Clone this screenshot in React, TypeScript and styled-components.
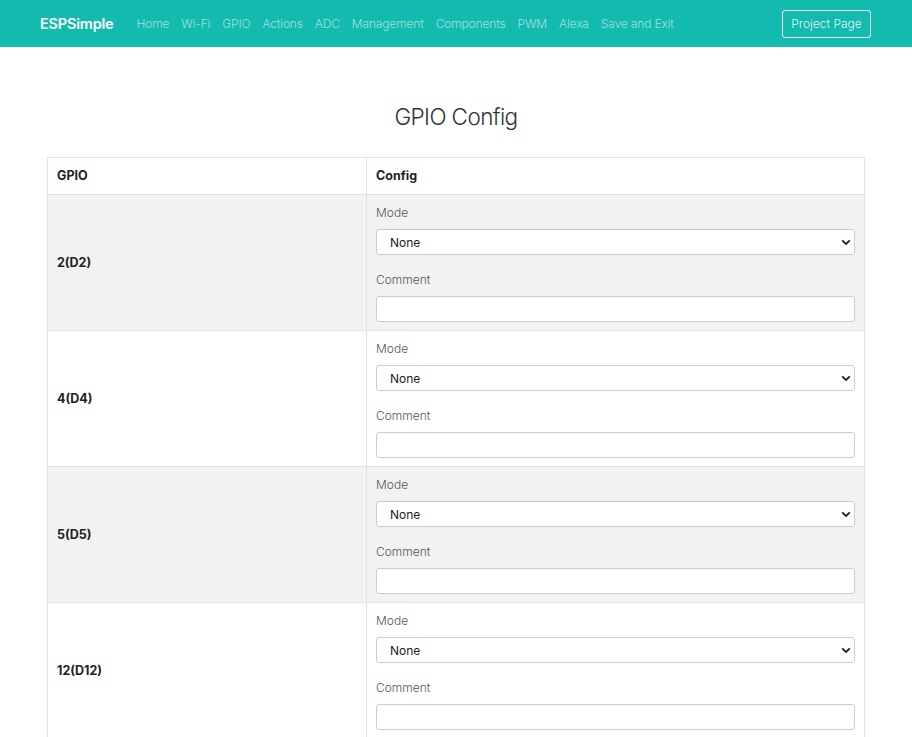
import React from "react";
import styled, { createGlobalStyle } from "styled-components";

const Global = createGlobalStyle`
  html, body { margin: 0; padding: 0; background: #fff; }
  body { font-family: Inter, "Noto Sans", "Liberation Sans", sans-serif; color: #333; font-size: 13px; }
  * { box-sizing: border-box; }
`;

const NavBar = styled.nav`
  height: 47px;
  background: #13baae;
  display: flex;
  align-items: center;
  padding: 0 41px 0 40px;
`;

const Brand = styled.a`
  color: #fff;
  font-weight: 600;
  font-size: 14.5px;
  letter-spacing: -0.2px;
  margin-right: 17px;
  text-decoration: none;
`;

const NavLinks = styled.div`
  display: flex;
  align-items: center;
  flex: 1;
`;

const NavLink = styled.a`
  color: rgba(255, 255, 255, 0.6);
  font-size: 12px;
  letter-spacing: -0.15px;
  font-weight: 300;
  padding: 0 6px;
  text-decoration: none;
`;

const OutlineButton = styled.a`
  border: 1px solid rgba(255, 255, 255, 0.9);
  border-radius: 3px;
  color: rgba(255, 255, 255, 0.9);
  font-size: 12px;
  font-weight: 300;
  height: 28px;
  width: 89px;
  justify-content: center;
  display: flex;
  align-items: center;
  text-decoration: none;
`;

const Main = styled.main`
  padding: 0 47px;
`;

const Title = styled.h1`
  margin: 55px 0 26px;
  text-align: center;
  font-size: 22.5px;
  letter-spacing: -0.6px;
  line-height: 29px;
  font-weight: 300;
  color: #333;
`;

const Table = styled.table`
  width: 100%;
  border-collapse: collapse;
  border: 1px solid #e2e2e2;
  table-layout: fixed;
`;

const HeadCell = styled.th<{ $w?: string }>`
  text-align: left;
  font-weight: 700;
  font-size: 12.5px;
  line-height: 18px;
  padding: 9px 9px;
  border: 1px solid #e2e2e2;
  width: ${(p) => p.$w ?? "auto"};
  color: #222;
`;

const Row = styled.tr<{ $striped: boolean }>`
  background: ${(p) => (p.$striped ? "#f2f2f2" : "#fff")};
`;

const PinCell = styled.td`
  font-weight: 700;
  font-size: 12.5px;
  color: #222;
  padding: 9px;
  vertical-align: middle;
  border: 1px solid #e2e2e2;
`;

const ConfigCell = styled.td`
  padding: 9px 9px 8px;
  border: 1px solid #e2e2e2;
`;

const Field = styled.div<{ $last?: boolean }>`
  display: flex;
  flex-direction: column;
  margin-bottom: ${(p) => (p.$last ? "0" : "16px")};
`;

const Label = styled.label`
  font-size: 12px;
  font-weight: 300;
  color: #555;
  line-height: 18px;
  margin-bottom: 7px;
`;

const Select = styled.select`
  appearance: none;
  -webkit-appearance: none;
  height: 26px;
  border: 1px solid #ccc;
  border-radius: 3px;
  background: #fff
    url("data:image/svg+xml,%3Csvg xmlns='http://www.w3.org/2000/svg' width='10' height='7' viewBox='0 0 10 7'%3E%3Cpath d='M1.2 1.3 L5 5 L8.8 1.3' fill='none' stroke='%23222' stroke-width='1.8'/%3E%3C/svg%3E")
    no-repeat right 3px center;
  font-family: inherit;
  font-size: 12px;
  color: #222;
  padding: 0 12px 0 13px;
`;

const Input = styled.input`
  height: 26px;
  border: 1px solid #ccc;
  border-radius: 3px;
  background: #fff;
  font-family: inherit;
  font-size: 12px;
  padding: 0 12px;
`;

const links = ["Home", "Wi-Fi", "GPIO", "Actions", "ADC", "Management", "Components", "PWM", "Alexa", "Save and Exit"];
const pins = ["2(D2)", "4(D4)", "5(D5)", "12(D12)", "13(D13)"];

export default function App() {
  return (
    <>
      <Global />
      <NavBar>
        <Brand href="#">ESPSimple</Brand>
        <NavLinks>
          {links.map((l) => (
            <NavLink key={l} href="#">{l}</NavLink>
          ))}
        </NavLinks>
        <OutlineButton href="#">Project Page</OutlineButton>
      </NavBar>
      <Main>
        <Title>GPIO Config</Title>
        <Table>
          <thead>
            <tr>
              <HeadCell $w="319px">GPIO</HeadCell>
              <HeadCell>Config</HeadCell>
            </tr>
          </thead>
          <tbody>
            {pins.map((p, i) => (
              <Row key={p} $striped={i % 2 === 0}>
                <PinCell>{p}</PinCell>
                <ConfigCell>
                  <Field>
                    <Label>Mode</Label>
                    <Select defaultValue="none">
                      <option value="none">None</option>
                    </Select>
                  </Field>
                  <Field $last>
                    <Label>Comment</Label>
                    <Input type="text" />
                  </Field>
                </ConfigCell>
              </Row>
            ))}
          </tbody>
        </Table>
      </Main>
    </>
  );
}
